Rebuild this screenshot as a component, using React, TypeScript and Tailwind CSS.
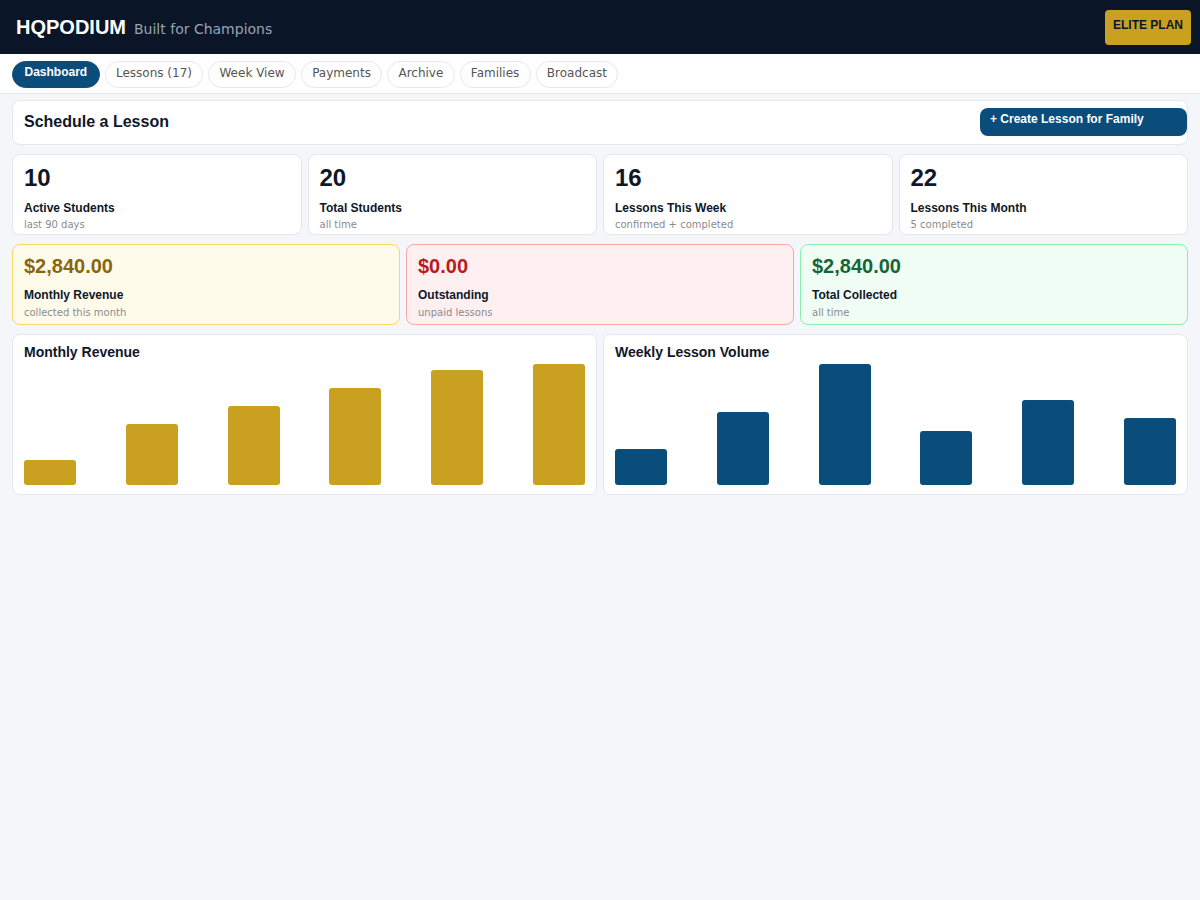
import React from 'react';

const tabs = ['Dashboard', 'Lessons (17)', 'Week View', 'Payments', 'Archive', 'Families', 'Broadcast'];

const stats = [
  { value: '10', label: 'Active Students', sub: 'last 90 days' },
  { value: '20', label: 'Total Students', sub: 'all time' },
  { value: '16', label: 'Lessons This Week', sub: 'confirmed + completed' },
  { value: '22', label: 'Lessons This Month', sub: '5 completed' },
];

const money = [
  {
    value: '$2,840.00',
    label: 'Monthly Revenue',
    sub: 'collected this month',
    box: 'bg-[#fefbea] border-[#f7d768]',
    text: 'text-[#8a6510]',
  },
  {
    value: '$0.00',
    label: 'Outstanding',
    sub: 'unpaid lessons',
    box: 'bg-[#fef0f0] border-[#f9a8a8]',
    text: 'text-[#b91c1c]',
  },
  {
    value: '$2,840.00',
    label: 'Total Collected',
    sub: 'all time',
    box: 'bg-[#effdf4] border-[#8ceeb0]',
    text: 'text-[#166534]',
  },
];

const revenue = [590, 1432, 1854, 2277, 2699, 2840];
const lessons = [6, 12, 20, 9, 14, 11];

const bold = "font-['Liberation_Sans',Arial,sans-serif] font-bold";

function BarChart({ title, data, color }: { title: string; data: number[]; color: string }) {
  const max = Math.max(...data);
  return (
    <div className="bg-white border border-[#e5e7eb] rounded-lg px-[11px] pt-[9px] pb-[9px]">
      <h3 className={`${bold} text-[14px] leading-4 text-[#0f172a]`}>{title}</h3>
      <div className="mt-[4px] h-[121px] flex items-end justify-between">
        {data.map((v, i) => (
          <div
            key={i}
            className={`w-[52px] rounded-[3px] ${color}`}
            style={{ height: `${Math.round((v / max) * 121)}px` }}
          />
        ))}
      </div>
    </div>
  );
}

export default function App() {
  return (
    <div className="min-h-[900px] bg-[#f5f6fa] font-['DejaVu_Sans',sans-serif]">
      <header className="h-[54px] bg-[#0a1628] flex items-center justify-between pl-4 pr-[9px]">
        <div className="flex items-baseline gap-2">
          <span className={`${bold} text-[20px] text-white`}>HQPODIUM</span>
          <span className="text-[14px] text-[#9aa3b2]">Built for Champions</span>
        </div>
        <button className={`${bold} h-[35px] px-2 pt-[1px] pb-[5px] rounded bg-[#c9a020] text-[12px] leading-[14px] text-[#0a1628]`}>
          ELITE PLAN
        </button>
      </header>

      <nav className="h-[40px] bg-white border-b border-[#e5e7eb] flex gap-[5px] px-3 pt-[7px]">
        {tabs.map((t, i) =>
          i === 0 ? (
            <button
              key={t}
              className={`${bold} h-[27px] px-[11.5px] pt-[1px] pb-[6px] rounded-full border border-[#0b4d7a] bg-[#0b4d7a] text-white text-[12px] leading-[15px]`}
            >
              {t}
            </button>
          ) : (
            <button
              key={t}
              className="h-[27px] px-[10.25px] pt-[2px] pb-[5px] rounded-full border border-[#e5e7eb] bg-white text-[#555] text-[12px] leading-[15px]"
            >
              {t}
            </button>
          )
        )}
      </nav>

      <main className="px-3 pt-[6px] flex flex-col gap-[9px]">
        <div className="bg-white border border-[#e5e7eb] rounded-lg flex items-center justify-between pl-[11px] pt-[7px] pb-[8px]">
          <h2 className={`${bold} text-[16px] leading-6 text-[#0f172a]`}>Schedule a Lesson</h2>
          <button className={`${bold} w-[207px] h-[28px] text-left pl-[10px] pt-[0px] pb-[5px] rounded-lg bg-[#0b4d7a] text-white text-[12px] leading-[15px]`}>
            + Create Lesson for Family
          </button>
        </div>

        <div className="grid grid-cols-4 gap-[6px]">
          {stats.map((s) => (
            <div key={s.label} className="bg-white border border-[#e5e7eb] rounded-lg px-[11px] pt-[9px] pb-[3px]">
              <div className={`${bold} text-[24px] leading-[28px] text-[#0f172a]`}>{s.value}</div>
              <div className={`${bold} mt-[8px] text-[12px] leading-4 text-[#0f172a]`}>{s.label}</div>
              <div className="mt-[2px] text-[10px] leading-[13px] text-[#8b8b8b]">{s.sub}</div>
            </div>
          ))}
        </div>

        <div className="grid grid-cols-3 gap-[6px]">
          {money.map((m) => (
            <div key={m.label} className={`border rounded-lg px-[11px] pt-[7px] pb-[5px] ${m.box}`}>
              <div className={`${bold} text-[20px] leading-[28px] ${m.text}`}>{m.value}</div>
              <div className={`${bold} mt-[7px] text-[12px] leading-4 text-[#0f172a]`}>{m.label}</div>
              <div className="mt-[3px] text-[10px] leading-[13px] text-[#8b8b8b]">{m.sub}</div>
            </div>
          ))}
        </div>

        <div className="grid grid-cols-2 gap-[6px]">
          <BarChart title="Monthly Revenue" data={revenue} color="bg-[#c9a020]" />
          <BarChart title="Weekly Lesson Volume" data={lessons} color="bg-[#0b4d7a]" />
        </div>
      </main>
    </div>
  );
}
